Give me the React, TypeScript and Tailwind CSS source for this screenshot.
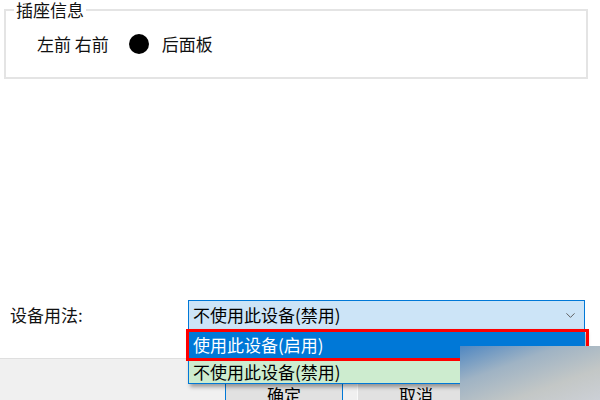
import { ChevronDown } from "lucide-react";

const font = "font-['Microsoft_YaHei','Noto_Sans_CJK_SC',sans-serif]";

function SocketInfo() {
  return (
    <fieldset className="ml-[4px] h-[79px] w-[584px] border-2 border-[#e4e4e4]">
      <legend className="ml-[8px] px-[2px] text-[17px] leading-[20px] text-[#111]">插座信息</legend>
      <div className="mt-[14px] flex h-[20px] items-center pl-[31px] text-[17px] text-[#111]">
        <span>左前 右前</span>
        <span className="ml-[20px] h-[20px] w-[20px] rounded-full bg-black" />
        <span className="ml-[13px]">后面板</span>
      </div>
    </fieldset>
  );
}

function UsageSelect() {
  return (
    <div className="relative flex h-[30px] w-[397px] items-center border border-[#0078d7] bg-[#cce4f7] pl-[4px] text-[17px] text-black">
      <span>不使用此设备(禁用)</span>
      <ChevronDown className="absolute right-[6px] top-[7px] h-[15px] w-[15px] text-[#555]" strokeWidth={1.5} />
      <div className="absolute left-[-1px] top-[28px] w-[397px] border border-t-0 border-[#0078d7] shadow-[2px_3px_4px_rgba(0,0,0,0.35)]">
        <div className="flex h-[31px] items-center bg-[#0078d7] pl-[4px] text-white">使用此设备(启用)</div>
        <div className="flex h-[23px] items-center bg-[#cdeccf] pl-[4px] text-black">不使用此设备(禁用)</div>
      </div>
      <div className="absolute left-[-3px] top-[28px] h-[32px] w-[403px] border-[3px] border-[#ff0000]" />
    </div>
  );
}

export default function App() {
  return (
    <div className={`relative flex h-[400px] w-[600px] flex-col overflow-hidden bg-white ${font}`}>
      <SocketInfo />
      <div className="flex-1" />
      <div className="relative z-10 flex items-center">
        <div className="w-[188px] pl-[10px] text-[17px] text-[#111]">设备用法:</div>
        <UsageSelect />
      </div>
      <div className="h-[28px]" />
      <div className="flex h-[42px] gap-[14px] border-t border-[#dfdfdf] bg-[#f0f0f0] pl-[225px] pt-[19px]">
        <button
          type="button"
          className="flex h-[31px] w-[118px] items-start justify-center border border-[#0078d7] bg-[#e1e1e1] pt-[6px] text-[17px] leading-[20px] text-black"
        >
          确定
        </button>
        <button
          type="button"
          className="flex h-[31px] w-[118px] items-start justify-center border border-[#fafafa] bg-[#e1e1e1] pt-[6px] text-[17px] leading-[20px] text-black"
        >
          取消
        </button>
      </div>
      {/* watermark blur in the corner */}
      <div className="absolute left-[460px] top-[346px] z-20 h-[54px] w-[140px] bg-[linear-gradient(160deg,#4f87c2_0%,#9fb3c4_35%,#c3c7c6_70%,#ccd0d6_100%)]" />
    </div>
  );
}
